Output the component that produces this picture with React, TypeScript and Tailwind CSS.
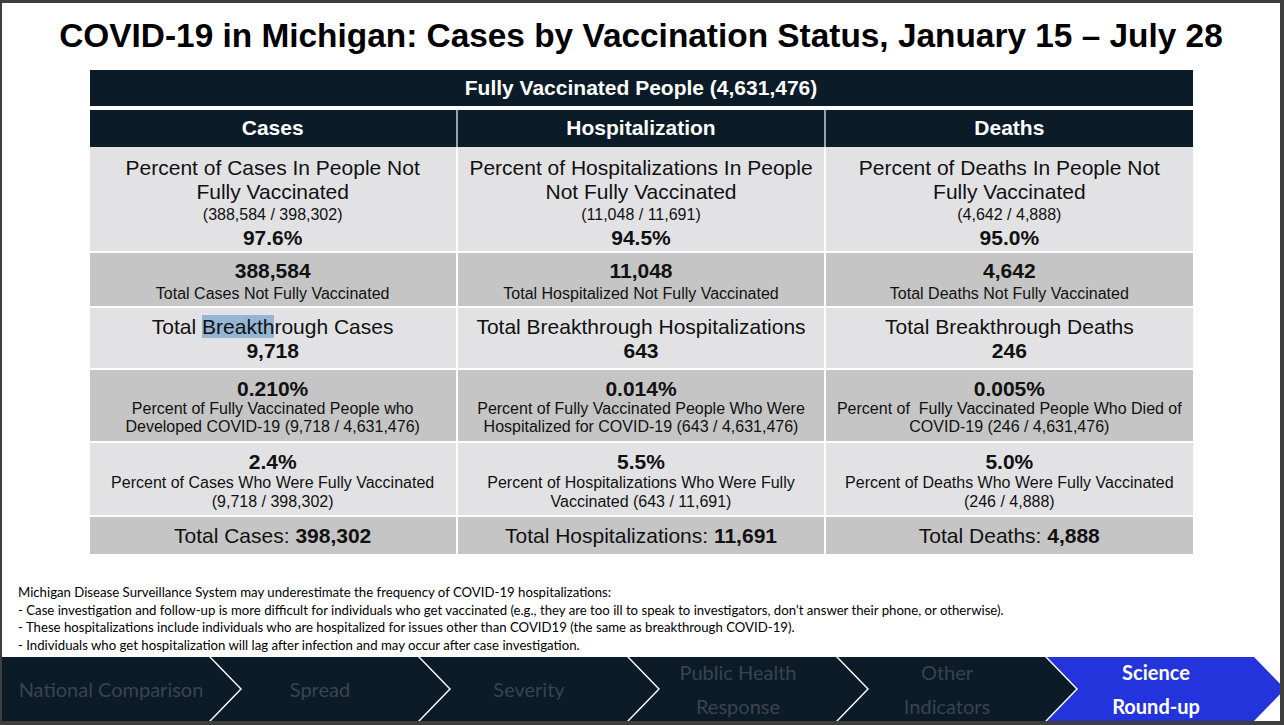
import type { ReactNode } from 'react'

interface Column {
  head: string
  pctTitle: string[]
  ratio: string
  pct: string
  notVax: string
  notVaxLabel: string
  btLabel: ReactNode
  bt: string
  rate: string
  rateLines: string[]
  share: string
  shareLines: string[]
  totalLabel: string
  total: string
}

const columns: Column[] = [
  {
    head: 'Cases',
    pctTitle: ['Percent of Cases In People Not', 'Fully Vaccinated'],
    ratio: '(388,584 / 398,302)',
    pct: '97.6%',
    notVax: '388,584',
    notVaxLabel: 'Total Cases Not Fully Vaccinated',
    btLabel: (
      <>
        Total <span className="bg-[#94b6d3]">Breakth</span>rough Cases
      </>
    ),
    bt: '9,718',
    rate: '0.210%',
    rateLines: ['Percent of Fully Vaccinated People who', 'Developed COVID-19 (9,718 / 4,631,476)'],
    share: '2.4%',
    shareLines: ['Percent of Cases Who Were Fully Vaccinated', '(9,718 / 398,302)'],
    totalLabel: 'Total Cases: ',
    total: '398,302',
  },
  {
    head: 'Hospitalization',
    pctTitle: ['Percent of Hospitalizations In People', 'Not Fully Vaccinated'],
    ratio: '(11,048 / 11,691)',
    pct: '94.5%',
    notVax: '11,048',
    notVaxLabel: 'Total Hospitalized Not Fully Vaccinated',
    btLabel: 'Total Breakthrough Hospitalizations',
    bt: '643',
    rate: '0.014%',
    rateLines: ['Percent of Fully Vaccinated People Who Were', 'Hospitalized for COVID-19 (643 / 4,631,476)'],
    share: '5.5%',
    shareLines: ['Percent of Hospitalizations Who Were Fully', 'Vaccinated (643 / 11,691)'],
    totalLabel: 'Total Hospitalizations: ',
    total: '11,691',
  },
  {
    head: 'Deaths',
    pctTitle: ['Percent of Deaths In People Not', 'Fully Vaccinated'],
    ratio: '(4,642 / 4,888)',
    pct: '95.0%',
    notVax: '4,642',
    notVaxLabel: 'Total Deaths Not Fully Vaccinated',
    btLabel: 'Total Breakthrough Deaths',
    bt: '246',
    rate: '0.005%',
    rateLines: ['Percent of  Fully Vaccinated People Who Died of', 'COVID-19 (246 / 4,631,476)'],
    share: '5.0%',
    shareLines: ['Percent of Deaths Who Were Fully Vaccinated', '(246 / 4,888)'],
    totalLabel: 'Total Deaths: ',
    total: '4,888',
  },
]

const navItems = [
  { lines: ['National Comparison'] },
  { lines: ['Spread'] },
  { lines: ['Severity'] },
  { lines: ['Public Health', 'Response'] },
  { lines: ['Other', 'Indicators'] },
  { lines: ['Science', 'Round-up'], active: true },
]

const footnotes = [
  'Michigan Disease Surveillance System may underestimate the frequency of COVID-19 hospitalizations:',
  '- Case investigation and follow-up is more difficult for individuals who get vaccinated (e.g., they are too ill to speak to investigators, don’t answer their phone, or otherwise).',
  '- These hospitalizations include individuals who are hospitalized for issues other than COVID19 (the same as breakthrough COVID-19).',
  '- Individuals who get hospitalization will lag after infection and may occur after case investigation.',
]

function Row({ className, children }: { className: string; children: (c: Column) => ReactNode }) {
  return (
    <div className="grid grid-cols-3 gap-x-[2px]">
      {columns.map((c) => (
        <div key={c.head} className={['flex flex-col items-center justify-center text-center', className].join(' ')}>
          {children(c)}
        </div>
      ))}
    </div>
  )
}

function Lines({ lines, className }: { lines: string[]; className: string }) {
  return (
    <>
      {lines.map((l) => (
        <div key={l} className={['whitespace-pre', className].join(' ')}>
          {l}
        </div>
      ))}
    </>
  )
}

export default function App() {
  return (
    <div className="w-[1284px] h-[725px] flex flex-col overflow-hidden bg-white border-l-2 border-t-[3px] border-r-4 border-b-4 border-[#3e3e3e] font-['Liberation_Sans',Arial,sans-serif] text-[#111]">
      {/* Title */}
      <h1 className="mt-[13px] h-[40px] leading-[40px] text-center text-[33.4px] font-bold text-black">
        COVID-19 in Michigan: Cases by Vaccination Status, January 15 – July 28
      </h1>

      {/* Table */}
      <div className="mt-[14px] mx-auto w-[1103px] flex flex-col">
        <div className="h-[36px] flex items-center justify-center bg-[#0b1b27] text-white text-[21px] font-bold">
          Fully Vaccinated People (4,631,476)
        </div>
        <div className="mt-[4px] grid grid-cols-3 gap-x-[2px] bg-[#94a1aa]">
          {columns.map((c) => (
            <div key={c.head} className="h-[37px] pb-[2px] flex items-center justify-center bg-[#0b1b27] text-white text-[21px] font-bold">
              {c.head}
            </div>
          ))}
        </div>
        <div className="flex flex-col gap-y-[2px]">
          <Row className="h-[104px] pt-[7px] bg-[#e2e2e4]">
            {(c) => (
              <>
                <Lines lines={c.pctTitle} className="text-[21px] leading-[24px]" />
                <div className="text-[16px] leading-[22px]">{c.ratio}</div>
                <div className="text-[21px] leading-[24px] font-bold">{c.pct}</div>
              </>
            )}
          </Row>
          <Row className="h-[53px] pt-[4px] bg-[#c5c5c5]">
            {(c) => (
              <>
                <div className="text-[21px] leading-[24px] font-bold">{c.notVax}</div>
                <div className="text-[16px] leading-[21px]">{c.notVaxLabel}</div>
              </>
            )}
          </Row>
          <Row className="h-[60px] pt-[1px] bg-[#e2e2e4]">
            {(c) => (
              <>
                <div className="text-[21px] leading-[24px]">{c.btLabel}</div>
                <div className="text-[21px] leading-[24px] font-bold">{c.bt}</div>
              </>
            )}
          </Row>
          <Row className="h-[71px] pt-[2px] bg-[#c5c5c5]">
            {(c) => (
              <>
                <div className="text-[21px] leading-[23px] font-bold">{c.rate}</div>
                <Lines lines={c.rateLines} className="text-[16px] leading-[18px]" />
              </>
            )}
          </Row>
          <Row className="h-[72px] pt-[2px] bg-[#e2e2e4]">
            {(c) => (
              <>
                <div className="text-[21px] leading-[23px] font-bold">{c.share}</div>
                <Lines lines={c.shareLines} className="text-[16px] leading-[19px]" />
              </>
            )}
          </Row>
          <Row className="h-[37px] bg-[#c5c5c5]">
            {(c) => (
              <div className="text-[21px] leading-[24px]">
                {c.totalLabel}
                <span className="font-bold">{c.total}</span>
              </div>
            )}
          </Row>
        </div>
      </div>

      {/* Footnote */}
      <div className="mt-[30px] pl-4 font-['Lato',sans-serif] text-[13.2px] leading-[17.5px] text-black">
        {footnotes.map((f) => (
          <div key={f} className="whitespace-nowrap">{f}</div>
        ))}
      </div>

      {/* Section nav */}
      <nav className="mt-auto flex h-[64px] font-['Lato',sans-serif] text-[20px]">
        {navItems.map((item, i) => (
          <div
            key={item.lines.join(' ')}
            className={[
              'shrink-0 w-[238px] flex flex-col items-center justify-center pr-5 leading-[34px]',
              i === 0
                ? '[clip-path:polygon(0_0,207px_0,100%_50%,207px_100%,0_100%)]'
                : 'ml-[-29px] [clip-path:polygon(0_0,207px_0,100%_50%,207px_100%,0_100%,31px_50%)]',
              item.active ? 'bg-[#2434dc] text-white font-bold' : 'bg-[#0b1b27] text-[#39444f]',
            ].join(' ')}
          >
            {item.lines.map((l) => (
              <span key={l}>{l}</span>
            ))}
          </div>
        ))}
      </nav>
    </div>
  )
}
